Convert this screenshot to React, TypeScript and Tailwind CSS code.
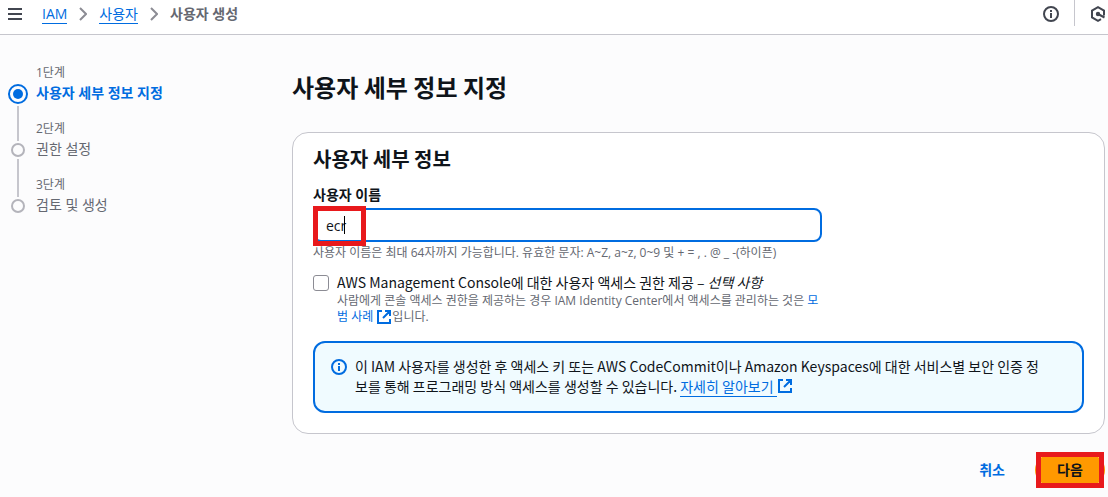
import React, { useState } from 'react';

const steps = [
  { id: 1, label: '1단계', title: '사용자 세부 정보 지정' },
  { id: 2, label: '2단계', title: '권한 설정' },
  { id: 3, label: '3단계', title: '검토 및 생성' },
];

function InfoIcon({ className }: { className: string }) {
  return (
    <svg viewBox="0 0 16 16" className={className} fill="none" stroke="currentColor" strokeWidth="2" aria-hidden="true">
      <circle cx="8" cy="8" r="7" />
      <path d="M8 12V7M8 6V4" />
    </svg>
  );
}

function ExternalIcon({ className }: { className: string }) {
  return (
    <svg viewBox="0 0 16 16" className={className} fill="none" stroke="currentColor" strokeWidth="2" aria-hidden="true">
      <path d="M6 2H2v12h12v-4M9 2h5v5M14 2 7 9" />
    </svg>
  );
}

function Chevron() {
  return (
    <svg viewBox="0 0 8 14" className="w-2 h-3.5 text-[#8c8c94]" fill="none" stroke="currentColor" strokeWidth="2" aria-hidden="true">
      <path d="m1 1 6 6-6 6" />
    </svg>
  );
}

function Header() {
  return (
    <header className="flex items-start justify-between h-[35px] pl-2 bg-white border-b border-[#c6c6cd]">
      <div className="flex items-center h-7">
        <button aria-label="메뉴" className="text-[#424650] cursor-pointer">
          <svg viewBox="0 0 14 12" className="w-3.5 h-3" stroke="currentColor" strokeWidth="2">
            <path d="M0 1h14M0 6h14M0 11h14" />
          </svg>
        </button>
        <nav className="flex items-center gap-3 ml-5 leading-5">
          <a href="#iam" className="text-[#006ce0] border-b border-[#006ce0] leading-[18px]">IAM</a>
          <Chevron />
          <a href="#users" className="text-[#006ce0] border-b border-[#006ce0] leading-[18px]">사용자</a>
          <Chevron />
          <span className="font-bold text-[#656871]">사용자 생성</span>
        </nav>
      </div>
      <div className="flex items-center h-7 text-[#424650]">
        <button aria-label="정보" className="cursor-pointer">
          <InfoIcon className="w-4 h-4" />
        </button>
        <div className="self-start w-px h-[26px] mx-[15px] bg-[#c6c6cd]" />
        <button aria-label="도구" className="cursor-pointer mr-0.5">
          <svg viewBox="0 0 16 16" className="w-4 h-4" fill="none" stroke="currentColor" strokeWidth="2">
            <path d="M14 9.5V4.6L8 1.2 2 4.6v6.8l6 3.4 3-1.7M8 8l6.5 3.5" />
            <circle cx="8" cy="8" r="1.2" fill="currentColor" />
          </svg>
        </button>
      </div>
    </header>
  );
}

function StepList({ current }: { current: number }) {
  return (
    <ol className="w-[284px] shrink-0 pt-[29px]">
      {steps.map((step, i) => {
        const active = step.id === current;
        const last = i === steps.length - 1;
        return (
          <li key={step.id} className="flex gap-2 h-14">
            <div className="flex flex-col items-center gap-0.5 w-5">
              <div className={i === 0 ? 'h-[18px] shrink-0' : 'w-0.5 h-[21px] shrink-0 bg-[#c6c6cd]'} />
              {active ? (
                <div className="flex items-center justify-center w-5 h-5 shrink-0 rounded-full border-2 border-[#006ce0]">
                  <div className="w-2.5 h-2.5 rounded-full bg-[#006ce0]" />
                </div>
              ) : (
                <div className="w-3.5 h-3.5 shrink-0 rounded-full border-2 border-[#b4b4bb]" />
              )}
              {!last && <div className="w-0.5 flex-1 bg-[#c6c6cd]" />}
            </div>
            <div className="pt-px">
              <div className="text-xs leading-4 text-[#656871]">{step.label}</div>
              <div className={active ? 'mt-0.5 leading-5 font-bold text-[#006ce0]' : 'mt-0.5 leading-5 text-[#656871]'}>
                {step.title}
              </div>
            </div>
          </li>
        );
      })}
    </ol>
  );
}

export default function App() {
  const [name, setName] = useState('ecr');

  return (
    <div className="min-h-screen bg-[#fcfcfd] text-[#0f141a] text-sm font-['Open_Sans','Noto_Sans_CJK_KR',sans-serif]">
      <Header />
      <div className="flex pl-2 pr-[3px]">
        <StepList current={1} />

        <main className="flex-1 min-w-0 pt-9">
          <h1 className="text-2xl leading-8 font-bold font-['Noto_Sans_CJK_KR',sans-serif]">사용자 세부 정보 지정</h1>

          <section className="mt-[29px] px-5 pt-3.5 pb-5 bg-white border border-[#c6c6cd] rounded-2xl">
            <h2 className="text-xl leading-6 font-bold font-['Noto_Sans_CJK_KR',sans-serif]">사용자 세부 정보</h2>

            <div className="w-[66%] mt-3.5">
              <label htmlFor="user-name" className="block leading-5 font-bold">사용자 이름</label>
              <div className="relative mt-[3px]">
                <input
                  id="user-name"
                  type="text"
                  value={name}
                  onChange={(e) => setName(e.target.value)}
                  className="block w-full h-[34px] px-[11px] bg-white border-2 border-[#006ce0] rounded-lg outline-none"
                />
                <div className="absolute left-[31px] top-2 w-px h-[18px] bg-black" />
                <div className="absolute left-0 -top-0.5 w-[53px] h-10 border-5 border-[#e8191c] pointer-events-none" />
              </div>
              <p className="mt-[3px] text-xs leading-4 text-[#656871]">
                사용자 이름은 최대 64자까지 가능합니다. 유효한 문자: A~Z, a~z, 0~9 및 + = , . @ _ -(하이픈)
              </p>

              <div className="flex gap-2 mt-3">
                <input
                  id="console-access"
                  type="checkbox"
                  className="appearance-none w-4 h-4 mt-0.5 shrink-0 bg-white border border-[#8c8c94] rounded-[3px] checked:bg-[#006ce0]"
                />
                <div>
                  <label htmlFor="console-access" className="block leading-[18px] pb-0.5 font-['Noto_Sans_CJK_KR',sans-serif]">
                    AWS Management Console에 대한 사용자 액세스 권한 제공 – <em>선택 사항</em>
                  </label>
                  <p className="text-xs leading-4 text-[#656871]">
                    사람에게 콘솔 액세스 권한을 제공하는 경우 IAM Identity Center에서 액세스를 관리하는 것은{' '}
                    <a href="#best-practice" className="text-[#006ce0]">
                      모범 사례 <ExternalIcon className="inline w-4 h-4 align-top" />
                    </a>
                    입니다.
                  </p>
                </div>
              </div>
            </div>

            <div className="flex gap-2 mt-4 pl-4 pr-9 pt-[13px] pb-[15px] bg-[#f0fbff] border-2 border-[#006ce0] rounded-xl">
              <InfoIcon className="w-4 h-4 mt-[3px] shrink-0 text-[#006ce0]" />
              <p className="leading-5 font-['Noto_Sans_CJK_KR',sans-serif]">
                이 IAM 사용자를 생성한 후 액세스 키 또는 AWS CodeCommit이나 Amazon Keyspaces에 대한 서비스별 보안 인증 정보를 통해 프로그래밍 방식 액세스를 생성할 수 있습니다.{' '}
                <a href="#learn-more" className="text-[#006ce0]">
                  <span className="border-b border-[#006ce0]">자세히 알아보기 </span>
                  <ExternalIcon className="inline w-4 h-4 mt-0.5 align-top" />
                </a>
              </p>
            </div>
          </section>

          <div className="flex justify-end items-center mt-5 pb-[11px]">
            <button className="h-8 px-5 font-bold text-[#006ce0] cursor-pointer">취소</button>
            <div className="relative ml-2.5">
              <button className="block w-[70px] h-8 rounded-full bg-[#ff9900] font-bold cursor-pointer">다음</button>
              <div className="absolute inset-x-px -inset-y-0.5 border-5 border-[#e8191c] pointer-events-none" />
            </div>
          </div>
        </main>
      </div>
    </div>
  );
}
